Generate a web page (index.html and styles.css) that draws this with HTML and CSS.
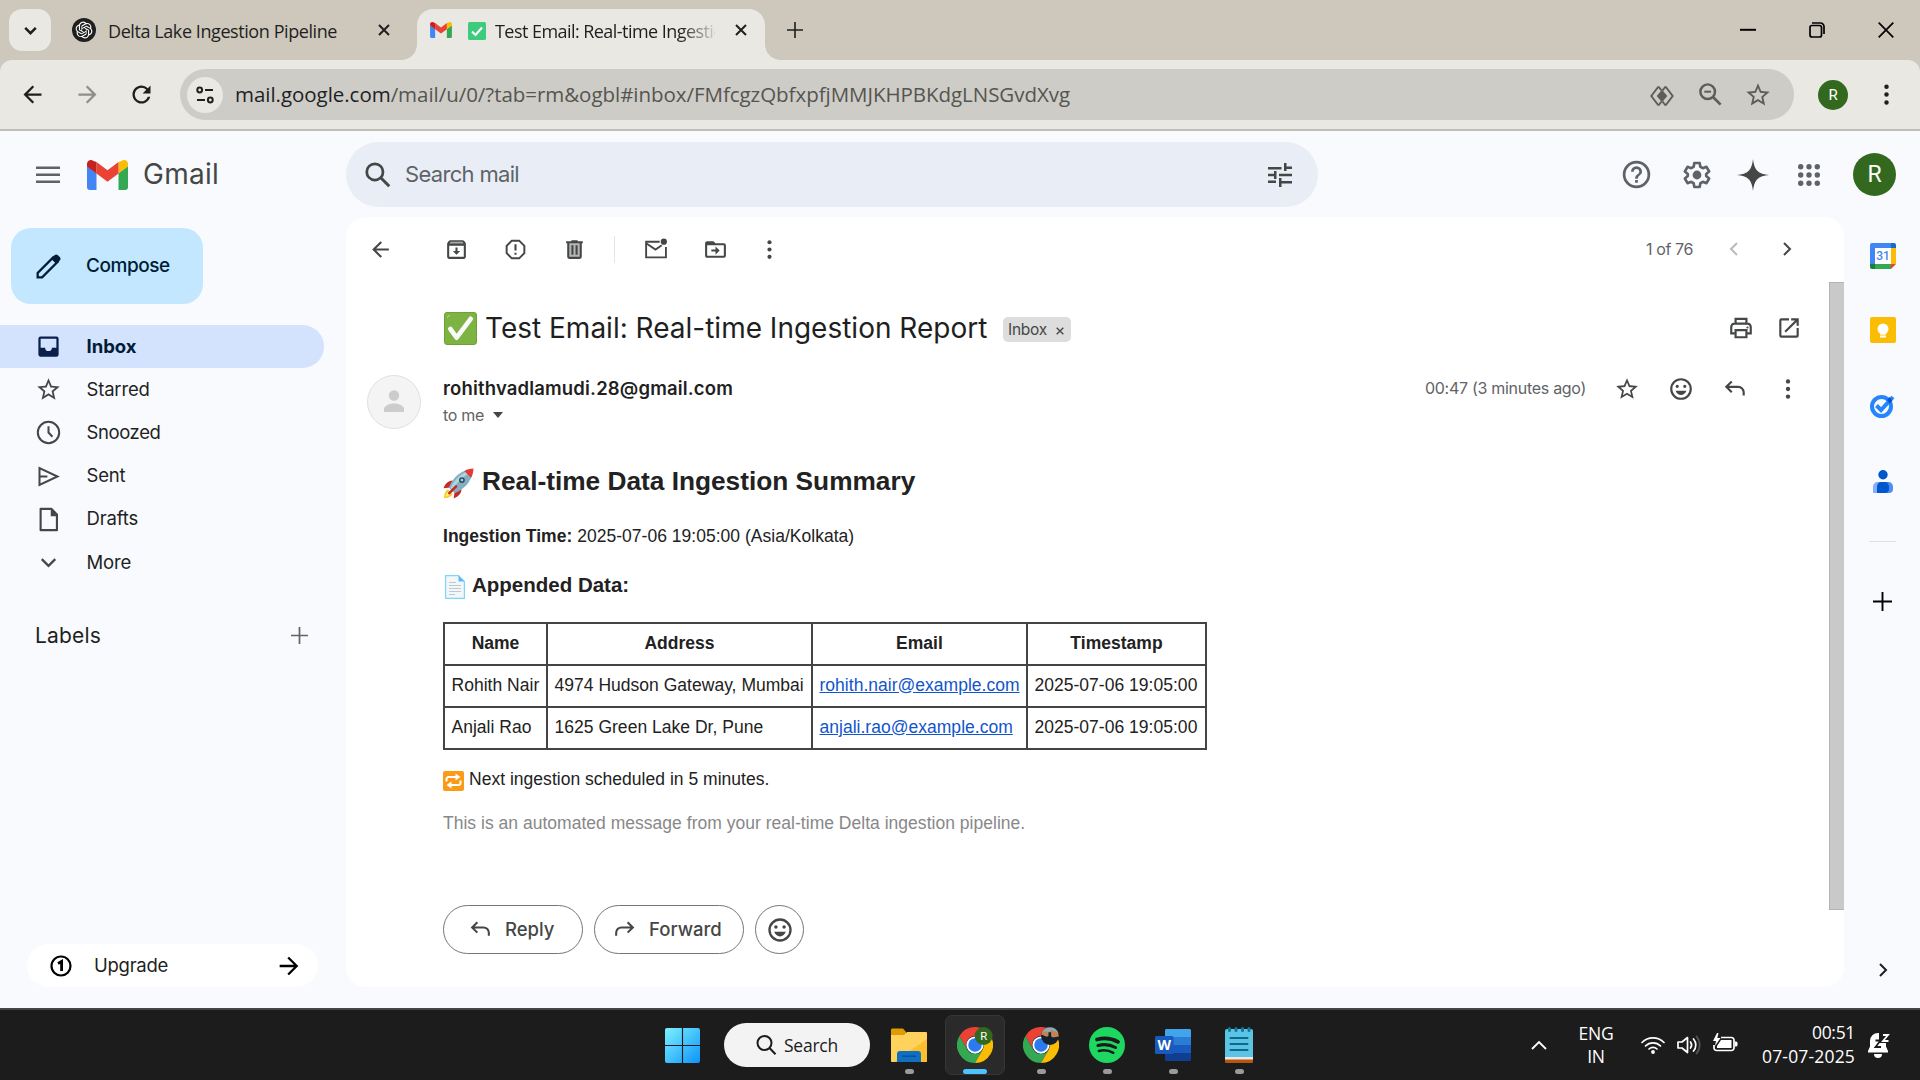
FILE: index.html
```html
<!DOCTYPE html>
<html lang="en">
<head>
<meta charset="utf-8">
<title>Test Email: Real-time Ingestion Report - Gmail</title>
<link rel="stylesheet" href="styles.css">
</head>
<body>
<svg class="defs" aria-hidden="true">
  <symbol id="i-gmail" viewBox="0 0 41 30"><path fill="#4285f4" d="M0 6v21a3 3 0 0 0 3 3h6.500V13z"/><path fill="#34a853" d="M31.500 30H38a3 3 0 0 0 3-3V6l-9.500 7z"/><path fill="#fbbc04" d="M31.500 2v11.500L41 6.500V4c0-3.500-4-5-6.500-3z"/><path fill="#ea4335" d="M9.500 13.500V2l11 8.300 11-8.300v11.500l-11 8.200z"/><path fill="#c5221f" d="M0 4v2.500l9.500 7V2L6.500 1C4-1 0 .5 0 4z"/></symbol>
  <symbol id="i-star" viewBox="0 0 24 24"><path d="M22 9.240l-7.190-.62L12 2 9.190 8.630 2 9.240l5.460 4.730L5.820 21 12 17.270 18.180 21l-1.630-7.030L22 9.240zM12 15.400l-3.760 2.270 1-4.280-3.320-2.880 4.380-.38L12 6.100l1.710 4.040 4.380.38-3.320 2.880 1 4.280L12 15.400z"/></symbol>
  <symbol id="i-back" viewBox="0 0 24 24"><path d="M20 11H7.830l5.590-5.590L12 4l-8 8 8 8 1.410-1.410L7.830 13H20v-2z"/></symbol>
  <symbol id="i-dots" viewBox="0 0 24 24"><circle cx="12" cy="5" r="2"/><circle cx="12" cy="12" r="2"/><circle cx="12" cy="19" r="2"/></symbol>
  <symbol id="i-smile" viewBox="0 0 24 24"><path d="M12 2a10 10 0 1 0 0 20 10 10 0 0 0 0-20zm0 18a8 8 0 1 1 0-16 8 8 0 0 1 0 16zM8.500 11a1.500 1.500 0 1 0 0-3 1.500 1.500 0 0 0 0 3zm7 0a1.500 1.500 0 1 0 0-3 1.500 1.500 0 0 0 0 3zM7 13.500c.8 2.300 2.700 4 5 4s4.200-1.700 5-4z"/></symbol>
  <symbol id="i-reply" viewBox="0 0 24 24"><path fill="none" stroke="currentColor" stroke-width="2" d="M9 5L4 10l5 5M4 10h11a5 5 0 0 1 5 5v3"/></symbol>
  <symbol id="i-x" viewBox="0 0 12 12"><path fill="none" stroke="currentColor" stroke-width="2" d="M1 1l10 10M11 1L1 11"/></symbol>
  <symbol id="i-plus" viewBox="0 0 20 20"><path d="M9 0h2v9h9v2h-9v9H9v-9H0V9h9z"/></symbol>
  <symbol id="i-chev" viewBox="0 0 16 16"><path fill="none" stroke="currentColor" stroke-width="2" d="M5 2l6 6-6 6"/></symbol>
  <symbol id="i-search" viewBox="0 0 24 24"><circle cx="9.500" cy="9.500" r="6.500" fill="none" stroke="currentColor" stroke-width="2.200"/><path fill="none" stroke="currentColor" stroke-width="2.400" d="M14 14l7 7"/></symbol>
  <symbol id="i-chrome" viewBox="0 0 48 48"><path fill="#ea4335" d="M3.200 12A24 24 0 0 1 44.800 12H24a12 12 0 0 0-10.400 18z"/><path fill="#34a853" d="M3.200 12A24 24 0 0 0 24 48l10.400-18a12 12 0 0 1-20.800 0z"/><path fill="#fbbc04" d="M24 12h20.800A24 24 0 0 1 24 48l10.400-18A12 12 0 0 0 24 12z"/><circle cx="24" cy="24" r="11.500" fill="#fff"/><circle cx="24" cy="24" r="9" fill="#2b7af0"/></symbol>
</svg>

<header class="tabstrip">
  <button class="tab-search"><svg viewBox="0 0 16 16"><path fill="none" stroke="currentColor" stroke-width="2.400" d="M3 5.500l5 5 5-5"/></svg></button>
  <div class="tab">
    <svg class="gpt" viewBox="0 0 24 24"><circle cx="12" cy="12" r="12"/><path transform="translate(3.600 3.600) scale(.7)" fill="#fff" d="M22.2819 9.8211a5.9847 5.9847 0 0 0-.5157-4.9108 6.0462 6.0462 0 0 0-6.5098-2.9A6.0651 6.0651 0 0 0 4.9807 4.1818a5.9847 5.9847 0 0 0-3.9977 2.9 6.0462 6.0462 0 0 0 .7427 7.0966 5.98 5.98 0 0 0 .511 4.9107 6.051 6.051 0 0 0 6.5146 2.9001A5.9847 5.9847 0 0 0 13.2599 24a6.0557 6.0557 0 0 0 5.7718-4.2058 5.9894 5.9894 0 0 0 3.9977-2.9001 6.0557 6.0557 0 0 0-.7475-7.0729zm-9.022 12.6081a4.4755 4.4755 0 0 1-2.8764-1.0408l.1419-.0804 4.7783-2.7582a.7948.7948 0 0 0 .3927-.6813v-6.7369l2.02 1.1686a.071.071 0 0 1 .038.052v5.5826a4.504 4.504 0 0 1-4.4945 4.4944zm-9.6607-4.1254a4.4708 4.4708 0 0 1-.5346-3.0137l.142.0852 4.783 2.7582a.7712.7712 0 0 0 .7806 0l5.8428-3.3685v2.3324a.0804.0804 0 0 1-.0332.0615L9.74 19.9502a4.4992 4.4992 0 0 1-6.1408-1.6464zM2.3408 7.8956a4.485 4.485 0 0 1 2.3655-1.9728V11.6a.7664.7664 0 0 0 .3879.6765l5.8144 3.3543-2.0201 1.1685a.0757.0757 0 0 1-.071 0l-4.8303-2.7865A4.504 4.504 0 0 1 2.3408 7.872zm16.5963 3.8558L13.1038 8.364 15.1192 7.2a.0757.0757 0 0 1 .071 0l4.8303 2.7913a4.4944 4.4944 0 0 1-.6765 8.1042v-5.6772a.79.79 0 0 0-.407-.667zm2.0107-3.0231l-.142-.0852-4.7735-2.7818a.7759.7759 0 0 0-.7854 0L9.409 9.2297V6.8974a.0662.0662 0 0 1 .0284-.0615l4.8303-2.7866a4.4992 4.4992 0 0 1 6.6802 4.66zM8.3065 12.863l-2.02-1.1638a.0804.0804 0 0 1-.038-.0567V6.0742a4.4992 4.4992 0 0 1 7.3757-3.4537l-.142.0805L8.704 5.459a.7948.7948 0 0 0-.3927.6813zm1.0976-2.3654l2.602-1.4998 2.6069 1.4998v2.9994l-2.5974 1.4997-2.6067-1.4997Z"/></svg>
    <span class="tab-title t1">Delta Lake Ingestion Pipeline</span>
    <svg class="x"><use href="#i-x"/></svg>
  </div>
  <div class="tab active">
    <svg class="fav"><use href="#i-gmail"/></svg>
    <svg class="tick" viewBox="0 0 18 18"><rect width="18" height="18" rx="1.500" fill="#3fcb7e"/><path fill="none" stroke="#fff" stroke-width="2" d="M4 9.500l3.500 3.500L14 5.500"/></svg>
    <span class="tab-title t2">Test Email: Real-time Ingestion Report</span>
    <svg class="x"><use href="#i-x"/></svg>
  </div>
  <svg class="newtab"><use href="#i-plus"/></svg>
  <div class="winctl">
    <svg viewBox="0 0 16 16"><path d="M0 6.800h16v2H0z"/></svg>
    <svg viewBox="0 0 16 16"><path fill="none" stroke="#000" stroke-width="1.700" d="M3 1h8.500A3.500 3.500 0 0 1 15 4.500V12"/><rect x="1" y="3.500" width="11.500" height="11.500" rx="2" fill="none" stroke="#000" stroke-width="1.700"/></svg>
    <svg viewBox="0 0 16 16"><path fill="none" stroke="#000" stroke-width="1.700" d="M.7.700l14.600 14.600M15.300.700L.7 15.300"/></svg>
  </div>
</header>

<div class="toolbar-wrap"><div class="toolbar">
  <svg class="tb-i"><use href="#i-back"/></svg>
  <svg class="tb-i fwd"><use href="#i-back"/></svg>
  <svg class="tb-i rel" viewBox="0 0 24 24"><path d="M17.650 6.350A8 8 0 1 0 19.730 14h-2.080A6 6 0 1 1 12 6c1.660 0 3.140.69 4.220 1.780L13 11h7V4z"/></svg>
  <div class="omnibox">
    <span class="site"><svg viewBox="0 0 18 18"><g fill="none" stroke="currentColor" stroke-width="2"><circle cx="3.700" cy="4" r="2.400"/><path d="M9 4h8M1 14h8"/><circle cx="14.300" cy="14" r="2.400"/></g></svg></span>
    <span class="url"><b>mail.google.com</b>/mail/u/0/?tab=rm&amp;ogbl#inbox/FMfcgzQbfxpfjMMJKHPBKdgLNSGvdXvg</span>
    <svg class="o1" viewBox="0 0 24 20"><path fill="none" stroke="currentColor" stroke-width="1.900" d="M11.500 4.500L9 1.200H8L1.300 10 8 18.800h1l2.500-3.300M12.500 4.500L15 1.200h1l6.700 8.800-6.700 8.800h-1l-2.500-3.300"/><path d="M12 3.800l5.300 6.200-5.300 6.200L6.700 10z"/></svg>
    <svg class="o2" viewBox="0 0 24 24"><use href="#i-search" width="24" height="24"/><path d="M6.500 8.600h6v1.800h-6z"/></svg>
    <svg class="o3"><use href="#i-star"/></svg>
  </div>
  <span class="ava small">R</span>
  <svg class="tb-dots"><use href="#i-dots"/></svg>
</div></div>

<div class="page">
  <div class="top">
    <svg class="burger" viewBox="0 0 24 18"><path d="M0 .5h24v2.400H0zM0 7.500h24v2.400H0zM0 14.500h24v2.400H0z"/></svg>
    <svg class="logo"><use href="#i-gmail"/></svg>
    <span class="word">Gmail</span>
    <div class="search">
      <svg class="s-i"><use href="#i-search"/></svg>
      <span class="s-t">Search mail</span>
      <svg class="s-f" viewBox="0 0 24 24"><path d="M0 17.500h8V20H0zM0 4h13.500v2.500H0zM11 24v-9h2.500v3H24v2.500H13.500V24zM6 8h2.500v8H6v-2.800H0v-2.500h6zM24 13.200H11v-2.500h13zM16 8V0h2.500v3.500H24V6h-5.500v2z"/></svg>
    </div>
    <svg class="help" viewBox="0 0 24 24"><path d="M11 18h2v-2h-2v2zm1-16a10 10 0 1 0 0 20 10 10 0 0 0 0-20zm0 18a8 8 0 1 1 0-16 8 8 0 0 1 0 16zm0-14a4 4 0 0 0-4 4h2a2 2 0 0 1 4 0c0 2-3 1.750-3 5h2c0-2.250 3-2.500 3-5a4 4 0 0 0-4-4z"/></svg>
    <svg class="gear" viewBox="0 0 24 24"><path fill="none" stroke="currentColor" stroke-width="2" stroke-linejoin="round" d="M10 3h4l.5 2.800 1.900 1.100 2.700-1 2 3.500-2.200 1.800v1.600l2.200 1.800-2 3.500-2.700-1-1.900 1.100L14 21h-4l-.5-2.800-1.900-1.100-2.700 1-2-3.500 2.200-1.800v-1.600L2.900 9.400l2-3.500 2.700 1 1.900-1.100z"/><circle cx="12" cy="12" r="3.300"/></svg>
    <svg class="spark" viewBox="0 0 32 32"><path d="M16 0c.6 5 1.500 8.500 4 11.500 3 3 7 4 12 4.500-5 .5-9 1.500-12 4.500-2.500 3-3.400 6.500-4 11.500-.6-5-1.500-8.500-4-11.500-3-3-7-4-12-4.500 5-.5 9-1.500 12-4.500 2.500-3 3.400-6.500 4-11.500z"/></svg>
    <svg class="grid" viewBox="0 0 22 22"><circle cx="2.700" cy="2.700" r="2.700"/><circle cx="11" cy="2.700" r="2.700"/><circle cx="19.300" cy="2.700" r="2.700"/><circle cx="2.700" cy="11" r="2.700"/><circle cx="11" cy="11" r="2.700"/><circle cx="19.300" cy="11" r="2.700"/><circle cx="2.700" cy="19.300" r="2.700"/><circle cx="11" cy="19.300" r="2.700"/><circle cx="19.300" cy="19.300" r="2.700"/></svg>
    <span class="ava big">R</span>
  </div>

  <div class="cols">
    <nav class="side">
      <button class="compose"><svg viewBox="0 0 24 24"><path fill="none" stroke="currentColor" stroke-width="2.200" d="M1.600 22.400v-4.300L16.500 3.200l4.300 4.300L5.900 22.400z"/><path d="M14.500 4.500L18 1c.8-.8 2-.8 2.800 0L23 3.200c.8.800.8 2 0 2.800l-3.500 3.500z"/></svg><span>Compose</span></button>
      <a class="nav on"><svg viewBox="0 0 24 24"><path fill-rule="evenodd" d="M19 3H5a2 2 0 0 0-2 2v14c0 1.100.9 2 2 2h14a2 2 0 0 0 2-2V5a2 2 0 0 0-2-2zm0 10h-4a3 3 0 0 1-6 0H5V5h14z"/></svg><span>Inbox</span></a>
      <a class="nav"><svg><use href="#i-star"/></svg><span>Starred</span></a>
      <a class="nav snoozed"><svg viewBox="0 0 24 24"><path fill="none" stroke="currentColor" stroke-width="1.800" d="M12 2.500a9.500 9.500 0 1 0 0 19 9.500 9.500 0 0 0 0-19zM12 6.500V12l3.500 3.800"/></svg><span>Snoozed</span></a>
      <a class="nav"><svg viewBox="0 0 24 24"><path fill="none" stroke="currentColor" stroke-width="1.800" d="M4 4.500v15L20 12zM4 12h7"/></svg><span>Sent</span></a>
      <a class="nav"><svg viewBox="0 0 24 24"><path fill="none" stroke="currentColor" stroke-width="1.900" stroke-linejoin="round" d="M5 2.500h9.500L19.500 7.500v14H5z"/><path d="M14 2v7h6z"/></svg><span>Drafts</span></a>
      <a class="nav"><svg viewBox="0 0 24 24"><path fill="none" stroke="currentColor" stroke-width="2" d="M6 9l6 6 6-6"/></svg><span>More</span></a>
      <div class="labels"><span>Labels</span><svg><use href="#i-plus"/></svg></div>
      <div class="upgrade"><svg class="one" viewBox="0 0 22 22"><circle cx="11" cy="11" r="9.500" fill="none" stroke="currentColor" stroke-width="2.200"/><path fill="none" stroke="currentColor" stroke-width="2.800" d="M8 8.500l3.600-2V16"/></svg><span>Upgrade</span><svg class="arr"><use href="#i-back"/></svg></div>
    </nav>

    <main class="card">
      <div class="actions">
        <svg><use href="#i-back"/></svg>
        <svg class="m1" viewBox="0 0 24 24"><path fill="#a9aaab" d="M4 4h16v4H4z"/><path fill-rule="evenodd" d="M20.500 5.200L19.200 3.500c-.3-.3-.7-.5-1.200-.5H6c-.5 0-.9.200-1.200.5L3.500 5.200c-.3.400-.5.800-.5 1.300V19c0 1.100.9 2 2 2h14c1.100 0 2-.9 2-2V6.500c0-.5-.2-.9-.5-1.300zM6.200 4.600h11.600l.9 1.600H5.300zM5 19V8.500h14V19z"/><path d="M11 10h2v3.500h2.500L12 17l-3.500-3.500H11z"/></svg>
        <svg class="m2" viewBox="0 0 24 24"><path fill="none" stroke="currentColor" stroke-width="1.900" d="M8.500 3.500h7L20.500 8.500v7L15.500 20.500h-7L3.500 15.500v-7z"/><path d="M11 7h2v6h-2zM11 15h2v2h-2z"/></svg>
        <svg class="m3" viewBox="0 0 24 24"><path fill="#b5b6b7" d="M6 5h12v15H6z"/><path fill-rule="evenodd" d="M15 4V3H9v1H4v2h1v13a2 2 0 0 0 2 2h10a2 2 0 0 0 2-2V6h1V4zm2 15H7V6h10zM9 8h2v9H9zm4 0h2v9h-2z"/></svg>
        <i></i>
        <svg class="m4" viewBox="0 0 24 24"><path fill="none" stroke="currentColor" stroke-width="1.800" d="M16 4.500H3v15h19V9.500M3 6l9 6 6-4"/><circle cx="20" cy="4.500" r="3"/></svg>
        <svg class="m5" viewBox="0 0 24 24"><path fill-rule="evenodd" d="M20 6h-8l-2-2H4a2 2 0 0 0-2 2v12c0 1.100.9 2 2 2h16a2 2 0 0 0 2-2V8a2 2 0 0 0-2-2zm0 12H4V8h16z"/><path d="M12 9v3H8v2h4v3l4-4z"/></svg>
        <svg class="m6"><use href="#i-dots"/></svg>
        <span class="count">1 of 76</span>
        <svg class="pv"><use href="#i-chev"/></svg>
        <svg class="nx"><use href="#i-chev"/></svg>
      </div>
      <div class="scroll">
        <div class="mail">
          <div class="subject">
            <svg class="check" viewBox="0 0 34 34"><rect x=".5" y=".5" width="33" height="33" rx="2.500" fill="#7cb342" stroke="#689f38"/><path fill="#aed581" d="M3 7c0-3 1-4 4-4-1 1-3 2-4 4z"/><path fill="none" stroke="#fafafa" stroke-width="4.800" stroke-linecap="round" stroke-linejoin="round" d="M6.500 17.500l6.500 9L27.500 7"/></svg>
            <h1>Test Email: Real-time Ingestion Report</h1>
            <span class="badge"><span>Inbox</span><svg><use href="#i-x"/></svg></span>
            <svg class="print" viewBox="0 0 24 24"><path fill="none" stroke="currentColor" stroke-width="2" d="M7 8V3.500h10V8M7 17H3v-6a3 3 0 0 1 3-3h12a3 3 0 0 1 3 3v6h-4M7 14h10v6.500H7z"/><circle cx="18" cy="11.500" r="1"/></svg>
            <svg class="open" viewBox="0 0 24 24"><path d="M19 19H5V5h7V3H5a2 2 0 0 0-2 2v14a2 2 0 0 0 2 2h14a2 2 0 0 0 2-2v-7h-2zM14 3v2h3.590l-9.830 9.830 1.410 1.410L19 6.410V10h2V3z"/></svg>
          </div>
          <div class="from">
            <svg class="person" viewBox="0 0 54 54"><circle cx="27" cy="27" r="26.500" fill="#f4f4f4" stroke="#e0e0e0"/><circle cx="27" cy="20.500" r="5.200" fill="#ccc"/><path fill="#ccc" d="M17 37v-3c0-3.500 6-5.500 10-5.500s10 2 10 5.500v3z"/></svg>
            <div class="who"><b>rohithvadlamudi.28@gmail.com</b><span><em>to me</em><svg viewBox="0 0 10 6"><path d="M0 0h10L5 6z"/></svg></span></div>
            <span class="when">00:47 (3 minutes ago)</span>
            <svg class="f1"><use href="#i-star"/></svg>
            <svg class="f2"><use href="#i-smile"/></svg>
            <svg class="f3"><use href="#i-reply"/></svg>
            <svg class="f4"><use href="#i-dots"/></svg>
          </div>
          <div class="body">
            <h2><svg viewBox="0 0 32 32"><path fill="#c62828" d="M10 13c-5 0-8 4-9.500 8l7-1zM19 22c0 5-4 8-8 9.500l1-7z"/><path fill="#ffca28" d="M5 22c-3 2-4 5-4 9 4 0 7-1 9-4z"/><path fill="#fff176" d="M6 24c-2 1.500-3 3-3.500 5.500C5 29 6.500 28 8 26z"/><path fill="#82aec0" d="M6 20C10 10 18 3 26 2l4 4c-1 8-8 16-18 20z"/><path fill="#b0d4e0" d="M8 20C12 12 18 6 24 4l2 2C20 10 13 16 10 23z"/><path fill="#e53935" d="M22 3c3-2 6-2 9.500-2.500C31 4 31 7 29 10z"/><circle cx="19.500" cy="12.500" r="3" fill="#2f4b56"/><circle cx="19.500" cy="12.500" r="1.500" fill="#94d1e0"/><path stroke="#c62828" stroke-width="2.600" stroke-linecap="round" d="M6.500 26l7-7"/></svg><span>Real-time Data Ingestion Summary</span></h2>
            <p class="time"><span><b>Ingestion Time:</b> 2025-07-06 19:05:00 (Asia/Kolkata)</span></p>
            <h3><svg viewBox="0 0 20 24"><path fill="#f2f8fa" stroke="#81d4fa" stroke-width="1.200" d="M.6.600h12.900l5.900 6v16.800H.6z"/><path fill="#64b5f6" d="M13.500.600v6h5.900z"/><path stroke="#bdc9ce" stroke-width="1" d="M4 7.500h7M4 10.500h12M4 13.500h12M4 16.500h12M4 19.500h6"/></svg><span>Appended Data:</span></h3>
            <table>
              <tr><th>Name</th><th>Address</th><th>Email</th><th>Timestamp</th></tr>
              <tr><td>Rohith Nair</td><td>4974 Hudson Gateway, Mumbai</td><td><a>rohith.nair@example.com</a></td><td>2025-07-06 19:05:00</td></tr>
              <tr><td>Anjali Rao</td><td>1625 Green Lake Dr, Pune</td><td><a>anjali.rao@example.com</a></td><td>2025-07-06 19:05:00</td></tr>
            </table>
            <p class="next"><svg viewBox="0 0 21 20"><rect width="21" height="20" rx="2" fill="#fb9a14"/><path fill="none" stroke="#fff" stroke-width="2" d="M3.500 10.500V8a2 2 0 0 1 2-2H14M17.500 9.500V12a2 2 0 0 1-2 2H7"/><path fill="#fff" d="M12.500 2.500L17.500 6l-5 3.500zM8.500 10.500l-5 3.500 5 3.500z"/></svg><span>Next ingestion scheduled in 5 minutes.</span></p>
            <p class="auto"><span>This is an automated message from your real-time Delta ingestion pipeline.</span></p>
            <div class="btns">
              <button class="b1"><svg><use href="#i-reply"/></svg><span>Reply</span></button>
              <button class="b2"><svg><use href="#i-reply"/></svg><span>Forward</span></button>
              <button class="b3"><svg><use href="#i-smile"/></svg></button>
            </div>
          </div>
        </div>
        <div class="bar"></div>
      </div>
    </main>

    <aside class="rail">
      <svg class="r1" viewBox="0 0 26 26"><path fill="#fff" d="M5 5h16v16H5z"/><path fill="#4285f4" d="M0 2a2 2 0 0 1 2-2h19v5H5v16H0z"/><path fill="#1967d2" d="M21 0h3a2 2 0 0 1 2 2v3h-5z"/><path fill="#fbbc04" d="M21 5h5v16h-5z"/><path fill="#34a853" d="M5 21h16v5H5z"/><path fill="#188038" d="M0 21h5v5H2a2 2 0 0 1-2-2z"/><path fill="#ea4335" d="M21 21h5l-5 5z"/><text x="13" y="17.300" text-anchor="middle">31</text></svg>
      <svg class="r2" viewBox="0 0 26 26"><rect width="26" height="26" rx="2" fill="#fbbc04"/><circle cx="13" cy="12" r="5.500" fill="#fff"/><path fill="#fff" d="M10 14h6v3.500h-6zM10 18.600h6v2h-6z"/></svg>
      <svg class="r3" viewBox="0 0 25 24"><circle cx="11.500" cy="12.500" r="9.500" fill="none" stroke="#2684fc" stroke-width="4"/><path fill="none" stroke="#2684fc" stroke-width="4" d="M6.500 11.500l4.500 4.500L23 3"/><path fill="#0057cc" d="M17 6l2.700-3 2.600 3.800-2.600 2.900z"/></svg>
      <svg class="r4" viewBox="0 0 20 23"><circle cx="10" cy="4.700" r="4.700" fill="#0057cc"/><path fill="#83aefb" d="M0 23v-6c0-3 2-5 5-5h4v11z"/><path fill="#4c8df6" d="M11 12h4c3 0 5 2 5 5v2c0 2.500-1.500 4-4 4h-5z"/><path fill="#0057cc" d="M4 23v-6c0-3 1.500-5 4-5h4c2.500 0 4 2 4 5v2c0 2.500-1.500 4-4 4z"/></svg>
      <i></i>
      <svg class="r5"><use href="#i-plus"/></svg>
      <svg class="r6"><use href="#i-chev"/></svg>
    </aside>
  </div>
</div>

<footer class="taskbar">
  <svg class="win" viewBox="0 0 36 36"><defs><linearGradient id="wg" x1="0" y1="0" x2="1" y2="1"><stop offset="0" stop-color="#7df1ff"/><stop offset="1" stop-color="#0c94fb"/></linearGradient></defs><path fill="url(#wg)" d="M2 0h15.400v17.400H0V2a2 2 0 0 1 2-2zM18.600 0H34a2 2 0 0 1 2 2v15.400H18.600zM0 18.600h17.400V36H2a2 2 0 0 1-2-2zM18.600 18.600H36V34a2 2 0 0 1-2 2H18.600z"/></svg>
  <div class="tsearch"><svg viewBox="0 0 20 20"><g fill="none" stroke="#1b1b1b" stroke-width="2"><circle cx="8.500" cy="8" r="7"/><path d="M13.500 13l6 6.300"/></g></svg><span>Search</span></div>
  <div class="app a1"><svg viewBox="0 0 36 36"><path fill="#e09b00" d="M0 3c0-1 .7-1.500 1.500-1.500H12l3 3.500v5H0z"/><path fill="#ffd35b" d="M0 8h13l3-3h19a1 1 0 0 1 1 1v28a1 1 0 0 1-1 1H1a1 1 0 0 1-1-1z"/><path fill="#fbbf2e" d="M36 12v22a1 1 0 0 1-1 1H3z"/><path fill="#0f6fc0" d="M6 35V27a3 3 0 0 1 3-3h18a3 3 0 0 1 3 3v8z"/><path fill="#0a4f96" d="M11 28.500h14V30H11z"/></svg><i></i></div>
  <div class="app a2 cur"><svg viewBox="0 0 48 48"><use href="#i-chrome"/><circle cx="35.500" cy="12" r="12" fill="#33691e"/><text x="35.500" y="17" text-anchor="middle">R</text></svg><i></i></div>
  <div class="app a3"><svg viewBox="0 0 48 48"><use href="#i-chrome"/><circle cx="36" cy="12" r="12" fill="#15202a"/><path fill="#8fa9ad" d="M24.800 8a12 12 0 0 1 22.400 0z"/><path fill="#c58255" d="M24.200 10l1-3 4.800-1 3.500 2 5-4 8.500 4 .8 4.500-8 1.500-4-3-4 2z"/><path fill="#15202a" d="M34 7h3.500v9H34z"/></svg><i></i></div>
  <div class="app a4"><svg viewBox="0 0 36 36"><circle cx="18" cy="18" r="18" fill="#1ed760"/><g fill="none" stroke="#1b1b1b" stroke-linecap="round"><path stroke-width="3.800" d="M8 12.500c7-2 14.500-1.300 21 2.300"/><path stroke-width="3.100" d="M9 18.500c6-1.600 12-1 17.500 2"/><path stroke-width="2.500" d="M9.800 24c5-1.200 10-.7 14.500 1.800"/></g></svg><i></i></div>
  <div class="app a5"><svg viewBox="0 0 36 36"><path fill="#41a5ee" d="M10 3.500c0-.8.700-1.500 1.500-1.500h23c.8 0 1.500.7 1.500 1.500V10H10z"/><path fill="#2b7cd3" d="M10 10h26v8H10z"/><path fill="#185abd" d="M10 18h26v8H10z"/><path fill="#103f91" d="M10 26h26v6.500c0 .8-.7 1.500-1.500 1.500h-23c-.8 0-1.500-.7-1.500-1.500z"/><rect y="9" width="18.500" height="18" rx="1.500" fill="#185abd"/><text x="9.200" y="23.200" text-anchor="middle">W</text></svg><i></i></div>
  <div class="app a6"><svg viewBox="0 0 36 36"><path fill="#b8560e" d="M4 31h28v4a1 1 0 0 1-1 1H5a1 1 0 0 1-1-1z"/><path fill="#e9e9e9" d="M4 28h28v4.500H4z"/><path fill="#5cc3e3" d="M4 4a2 2 0 0 1 2-2h24a2 2 0 0 1 2 2v26H4z"/><path stroke="#0b6a91" stroke-width="2" stroke-linecap="round" d="M9.500 11h17M9.500 17h17M9.500 23h17"/><path stroke="#0d7aa5" stroke-width="3" stroke-linecap="round" d="M8.500 1.500v2M15 1.500v2M21.500 1.500v2M28 1.500v2"/></svg><i></i></div>
  <div class="tray">
    <svg class="y1" viewBox="0 0 16 10"><path fill="none" stroke="#fff" stroke-width="1.800" d="M1 9l7-7 7 7"/></svg>
    <div class="lang"><span>ENG</span><span>IN</span></div>
    <svg class="y2" viewBox="0 0 24 18"><g fill="none" stroke="#fff" stroke-width="1.700" stroke-linecap="round"><path d="M1 6.500a15.500 15.500 0 0 1 22 0M4.500 10a10.500 10.500 0 0 1 15 0M8 13a5.800 5.800 0 0 1 8 0"/></g><circle cx="12" cy="16" r="1.900" fill="#fff"/></svg>
    <svg class="y3" viewBox="0 0 25 20"><g fill="none" stroke="#fff" stroke-width="1.700" stroke-linejoin="round" stroke-linecap="round"><path d="M1 7v6h4l5.500 4.500v-15L5 7zM13.500 7a5 5 0 0 1 0 6M16.500 4a9 9 0 0 1 0 12"/><path stroke="#555" d="M19.500 1.500a13 13 0 0 1 0 17"/></g></svg>
    <svg class="y4" viewBox="0 0 25 20"><path fill="none" stroke="#fff" stroke-width="1.700" d="M8 4.500h10.500a2.500 2.500 0 0 1 2.500 2.500v8a2.500 2.500 0 0 1-2.500 2.500H3.500A2.500 2.500 0 0 1 1 15v-3"/><path fill="#fff" d="M8 7h10.500v8H4v-2zM22 8.500h1a1.500 1.500 0 0 1 1.500 1.500v2a1.500 1.500 0 0 1-1.500 1.500h-1zM4 0L0 8h3l-1 5 5.500-8H4.300L5.500 0z"/></svg>
    <div class="clock"><span class="hm">00:51</span><span class="dt">07-07-2025</span></div>
    <svg class="y5" viewBox="0 0 22 24"><path fill="#fff" d="M10 0a8 8 0 0 0-8 8v5.500L0 18v1.500h20V18l-2-4.500V10H11V0zM6 21h8a4 4 0 0 1-8 0z"/><path fill="none" stroke="#fff" stroke-width="1.800" d="M15 2h5l-5 6h5.500"/><path fill="none" stroke="#1b1b1b" stroke-width="1.800" d="M7.500 7.500h5l-5 6.500H13"/></svg>
  </div>
</footer>
</body>
</html>
```
FILE: styles.css
```css
* { box-sizing: border-box; }
body { margin: 0; width: 1920px; height: 1080px; overflow: hidden; display: flex; flex-direction: column; font-family: Inter, "Liberation Sans", sans-serif; color: #1f1f1f; background: #f8fafd; }
svg { display: block; flex: none; fill: currentColor; overflow: visible; }
span, b, a, h1, h2, h3 { white-space: nowrap; }
button { font: inherit; color: inherit; border: 0; padding: 0; background: none; }
.defs { position: absolute; width: 0; height: 0; }

.tabstrip { flex: none; height: 60px; background: #cdc8bb; display: flex; align-items: center; padding-left: 9px; font-family: "Open Sans", sans-serif; font-size: 18px; }
.tab-search { width: 42px; height: 42px; border-radius: 13px; background: #e9e8e3; display: flex; align-items: center; justify-content: center; }
.tab-search svg { width: 17px; height: 17px; }
.tab { display: flex; align-items: center; height: 51px; width: 345px; padding-left: 21px; }
.gpt { width: 24px; height: 24px; }
.tab-title { line-height: 26px; overflow: hidden; margin-top: 2px; }
.t1 { margin-left: 12px; width: 257px; letter-spacing: -0.42px; }
.x { width: 12px; height: 12px; margin-left: 13px; }
.tab.active { position: relative; align-self: flex-end; width: 348px; margin-left: 21px; padding: 0 0 9px 13px; background: #e9e8e3; border-radius: 16px 16px 0 0; }
.tab.active::before, .tab.active::after { content: ""; position: absolute; bottom: 0; width: 15px; height: 15px; }
.tab.active::before { left: -15px; background: radial-gradient(circle at 0 0, transparent 14.500px, #e9e8e3 15px); }
.tab.active::after { right: -15px; background: radial-gradient(circle at 100% 0, transparent 14.500px, #e9e8e3 15px); }
.fav { width: 22px; height: 16px; }
.tick { width: 18px; height: 18px; margin: 2px 9px 0 16px; }
.t2 { width: 220px; letter-spacing: -0.55px; -webkit-mask-image: linear-gradient(90deg, #000 185px, transparent 224px); mask-image: linear-gradient(90deg, #000 185px, transparent 224px); }
.active .x { margin-left: 20px; }
.newtab { width: 16px; height: 16px; margin-left: 22px; }
.winctl { margin-left: auto; padding-right: 26px; display: flex; gap: 53px; color: #000; }
.winctl svg { width: 16px; height: 16px; }

.toolbar-wrap { flex: none; height: 71px; background: #cdc8bb; }
.toolbar { height: 71px; background: #e9e8e3; border-bottom: 2px solid #c0beb7; border-radius: 12px 12px 0 0; display: flex; align-items: center; padding-left: 19px; color: #1f1f1f; }
.tb-i { width: 27px; height: 27px; }
.fwd { transform: scaleX(-1); margin-left: 28px; color: #8f8e8b; }
.rel { margin-left: 27px; }
.omnibox { width: 1614px; height: 51px; border-radius: 26px; background: #cdccc7; margin-left: 25px; display: flex; align-items: center; padding-left: 7px; }
.site { width: 36px; height: 36px; border-radius: 50%; background: #e9e8e3; display: flex; align-items: center; justify-content: center; }
.site svg { width: 18px; height: 18px; }
.url { font-family: "Open Sans", sans-serif; font-size: 20.500px; letter-spacing: -0.04px; color: #55554f; margin-left: 12px; padding-bottom: 2px; width: 1415px; }
.url b { font-weight: 400; color: #1f1f1f; }
.omnibox svg { color: #5d5d5b; }
.omnibox .site svg { color: #1f1f1f; }
.o1 { width: 24px; height: 20px; margin-top: 3px; }
.o2 { width: 27px; height: 27px; margin-left: 23px; }
.o3 { width: 28px; height: 28px; margin-left: 20px; }
.ava { background: #33691e; color: #fff; border-radius: 50%; display: flex; align-items: center; justify-content: center; font-family: Roboto, sans-serif; }
.small { width: 30px; height: 30px; font-size: 15px; margin-left: 24px; }
.tb-dots { width: 27px; height: 27px; margin-left: 25px; }

.page { flex: none; height: 877px; background: #f8fafd; }
.top { height: 86px; display: flex; align-items: center; padding: 1px 0 0 36px; color: #444746; }
.burger { width: 24px; height: 18px; color: #5f6368; }
.logo { width: 41px; height: 30px; margin-left: 27px; }
.word { font-size: 28px; letter-spacing: 0.26px; margin-left: 15px; padding-bottom: 1px; width: 203px; color: #444746; }
.search { width: 972px; height: 65px; border-radius: 33px; background: #e9eef6; display: flex; align-items: center; padding-left: 17px; }
.s-i { width: 30px; height: 30px; }
.s-t { font-size: 22px; letter-spacing: -0.68px; color: #5f6368; margin-left: 12px; padding-bottom: 2px; width: 863px; }
.s-f { width: 24px; height: 24px; }
.help, .gear { color: #5f6368; }
.help { width: 33px; height: 33px; margin-left: 302px; }
.gear { width: 32px; height: 32px; margin-left: 28px; }
.spark { width: 32px; height: 32px; margin-left: 24px; }
.grid { width: 22px; height: 22px; margin-left: 29px; color: #5f6368; }
.big { width: 43px; height: 43px; font-size: 23px; margin-left: 33px; }

.cols { display: flex; height: 770px; }
.side { width: 346px; display: flex; flex-direction: column; align-items: flex-start; height: 770px; }
.compose { width: 192px; height: 76px; margin: 11px 0 21px 11px; background: #c2e7ff; border-radius: 20px; color: #001d35; display: flex; align-items: center; padding-left: 25px; gap: 25px; font-size: 19px; font-weight: 500; letter-spacing: -0.45px; }
.compose svg { width: 25px; height: 25px; }
.compose span, .nav span, .upgrade span { padding-bottom: 2px; }
.nav { width: 324px; height: 43.200px; display: flex; align-items: center; padding-left: 35px; gap: 24.500px; font-size: 18.500px; letter-spacing: -0.18px; }
.nav.snoozed { letter-spacing: -0.4px; }
.nav svg { width: 27px; height: 27px; color: #444746; }
.nav.on { background: #d3e3fd; border-radius: 0 22px 22px 0; font-weight: 700; letter-spacing: 0; color: #001d35; }
.nav.on svg { color: #0b1f4d; }
.labels { display: flex; align-items: center; justify-content: space-between; width: 308px; height: 30px; margin-top: 36px; padding-left: 35px; font-size: 21px; letter-spacing: 0.17px; }
.labels svg { width: 17px; height: 17px; color: #5f6368; }
.upgrade { display: flex; align-items: center; width: 291px; height: 43px; margin: auto 0 0 27px; border-radius: 22px; background: #fff; padding-left: 23px; font-size: 18.500px; letter-spacing: -0.27px; }
.one { width: 22px; height: 22px; margin-right: 22px; color: #000; }
.arr { width: 28px; height: 28px; transform: scaleX(-1); margin-left: auto; margin-right: 15px; color: #000; }

.card { width: 1498px; height: 770px; background: #fff; border-radius: 20px; overflow: hidden; color: #444746; }
.actions { height: 64px; display: flex; align-items: center; padding-left: 22px; }
.actions svg { width: 25px; height: 25px; }
.actions i { width: 1px; height: 27px; background: #e2e5ea; margin-left: 27px; }
.actions .m1 { margin-left: 51px; }
.actions .m2 { margin-left: 34px; }
.actions .m3 { margin-left: 34px; }
.actions .m4 { margin-left: 28px; }
.actions .m5 { margin-left: 35px; }
.actions .m6 { margin-left: 29px; }
.count { font-size: 16px; letter-spacing: -0.39px; color: #5f6368; margin-left: 864px; width: 47px; }
.actions .pv, .actions .nx { width: 16px; height: 16px; }
.actions .pv { transform: scaleX(-1); margin-left: 33px; color: #b9bbbe; }
.actions .nx { margin-left: 37px; }
.scroll { display: flex; height: 706px; }
.mail { width: 1483px; }
.bar { width: 15px; height: 628px; margin-top: 1px; background: #c9c9c9; border: solid #b4b4b4; border-width: 1px 0 1px 1px; }
.subject { display: flex; align-items: center; height: 60px; margin-top: 17px; padding-left: 98px; }
.check { width: 33px; height: 33px; }
h1 { font-size: 28px; font-weight: 400; margin: 0 0 0 8px; width: 518px; line-height: 60px; color: #1f1f1f; }
.badge { width: 68px; height: 25px; border-radius: 5px; background: #ddd; display: flex; align-items: center; padding: 0 0 0 5px; font-size: 15.500px; letter-spacing: -0.24px; margin-top: 3px; }
.badge span { width: 39px; }
.badge svg { width: 8px; height: 8px; margin: 2px 0 0 9px; }
.print { width: 26px; height: 26px; margin-left: 657px; }
.open { width: 26px; height: 26px; margin-left: 22px; }
.from { display: flex; height: 92px; padding-left: 21px; align-items: flex-start; }
.person { width: 54px; height: 54px; margin-top: 17px; }
.who { width: 982px; margin-left: 22px; padding-top: 16px; display: flex; flex-direction: column; }
.who b { font-size: 18.500px; font-weight: 600; letter-spacing: 0.16px; line-height: 28px; color: #1f1f1f; }
.who > span { display: flex; align-items: center; height: 26px; font-size: 16px; letter-spacing: -0.3px; color: #5f6368; }
.who em { font-style: normal; width: 41px; }
.who svg { width: 10px; height: 6px; margin-left: 9px; color: #444746; }
.when { font-size: 16px; letter-spacing: -0.29px; color: #5f6368; width: 161px; line-height: 28px; margin-top: 16px; }
.from > svg:not(.person) { width: 26px; height: 26px; margin-top: 18px; }
.from .f1 { margin-left: 28px; }
.from .f2 { margin-left: 28px; }
.from .f3 { margin-left: 28px; }
.from .f4 { margin-left: 27px; }

.body { padding-left: 97px; font-family: "Liberation Sans", Arial, sans-serif; font-size: 17.500px; letter-spacing: 0.02px; color: #222; }
h2, h3, p { margin: 0; display: flex; align-items: center; }
h2 { height: 62px; font-size: 26.250px; letter-spacing: 0; }
h2 svg { width: 31px; height: 31px; margin: 4px 8px 0 0; }
p.time { height: 48px; }
h3 { height: 49px; font-size: 20.500px; letter-spacing: 0; }
h3 svg { width: 20px; height: 24px; margin: 5px 7px 0 2px; }
table { border-collapse: collapse; table-layout: fixed; width: 764px; height: 127px; margin-top: 13px; }
th, td { border: 2px solid #444; padding: 0 0 2px 6.500px; text-align: left; white-space: nowrap; height: 42px; }
th { padding: 0 0 2px; text-align: center; }
th:nth-child(1) { width: 103px; }
th:nth-child(2) { width: 265px; }
th:nth-child(3) { width: 215px; }
td a { color: #1155cc; text-decoration: underline; }
p.next { height: 58px; }
.next svg { width: 21px; height: 20px; margin: 4px 5px 0 0; }
p.auto { height: 28px; margin-top: 1px; color: #888; }
.btns { display: flex; margin-top: 68px; font-family: Inter, sans-serif; font-size: 18.500px; font-weight: 500; letter-spacing: -0.1px; color: #444746; }
.btns button { height: 49px; border: 1px solid #747775; border-radius: 25px; display: flex; align-items: center; gap: 12px; }
.btns svg { width: 25px; height: 25px; }
.btns span { padding-bottom: 1px; }
.btns .b1 { width: 140px; padding-left: 24px; }
.btns .b2 { width: 150px; padding-left: 17px; margin-left: 11px; }
.b2 svg { transform: scaleX(-1); }
.btns .b3 { width: 49px; margin-left: 11px; justify-content: center; }
.btns .b3 svg { width: 28px; height: 28px; }

.rail { width: 76px; display: flex; flex-direction: column; align-items: center; padding: 26px 0 0 1px; color: #1f1f1f; }
.r1 { width: 26px; height: 26px; }
.r1 text { font: 500 12px Roboto, sans-serif; fill: #4285f4; }
.r2 { width: 26px; height: 26px; margin-top: 48px; }
.r3 { width: 25px; height: 24px; margin-top: 51px; }
.r4 { width: 20px; height: 23px; margin-top: 52px; }
.rail i { width: 27px; height: 1px; background: #dcdfe3; margin-top: 48px; }
.r5 { width: 19px; height: 19px; margin-top: 50px; color: #000; }
.r6 { width: 16px; height: 16px; margin-top: 351px; }

.taskbar { flex: none; height: 72px; background: #1c1c1c; border-top: 2px solid #454545; display: flex; align-items: center; padding-left: 665px; font-family: "Open Sans", sans-serif; }
.win { width: 35px; height: 35px; }
.tsearch { width: 146px; height: 44px; border-radius: 22px; background: #f3f3f3; margin: 0 0 1px 24px; padding-left: 32px; display: flex; align-items: center; gap: 8px; font-size: 17.500px; letter-spacing: -0.24px; color: #1b1b1b; }
.tsearch svg { width: 20px; height: 20px; }
.app { position: relative; width: 60px; height: 60px; margin-left: 6px; border-radius: 7px; display: flex; align-items: center; justify-content: center; }
.app.a1 { margin-left: 9px; }
.app svg { width: 36px; height: 36px; }
.app i { position: absolute; left: 26px; bottom: 1px; width: 9px; height: 5px; border-radius: 3px; background: #9a9a9a; }
.cur { background: #2a2a2a; border: 1px solid #363636; }
.cur i { left: 17px; bottom: 0; width: 24px; background: #4cc2ff; }
.a2 text { font: 15px Roboto, sans-serif; fill: #fff; }
.a5 text { font: 700 14px "Open Sans", sans-serif; fill: #fff; }
.tray { display: flex; align-items: center; color: #fff; font-size: 17.500px; line-height: 23px; margin-left: 262px; }
.y1 { width: 16px; height: 10px; }
.lang { display: flex; flex-direction: column; align-items: center; width: 36px; margin-left: 31px; letter-spacing: -0.2px; }
.y2 { width: 24px; height: 18px; margin-left: 27px; }
.y3 { width: 25px; height: 20px; margin-left: 12px; }
.y4 { width: 25px; height: 20px; margin-left: 11px; margin-top: -4px; }
.clock { display: flex; flex-direction: column; align-items: flex-end; width: 117px; margin-top: -3px; line-height: 24px; }
.hm { letter-spacing: -0.33px; }
.dt { letter-spacing: 0.17px; }
.y5 { width: 22px; height: 24px; margin-left: 13px; }
```
